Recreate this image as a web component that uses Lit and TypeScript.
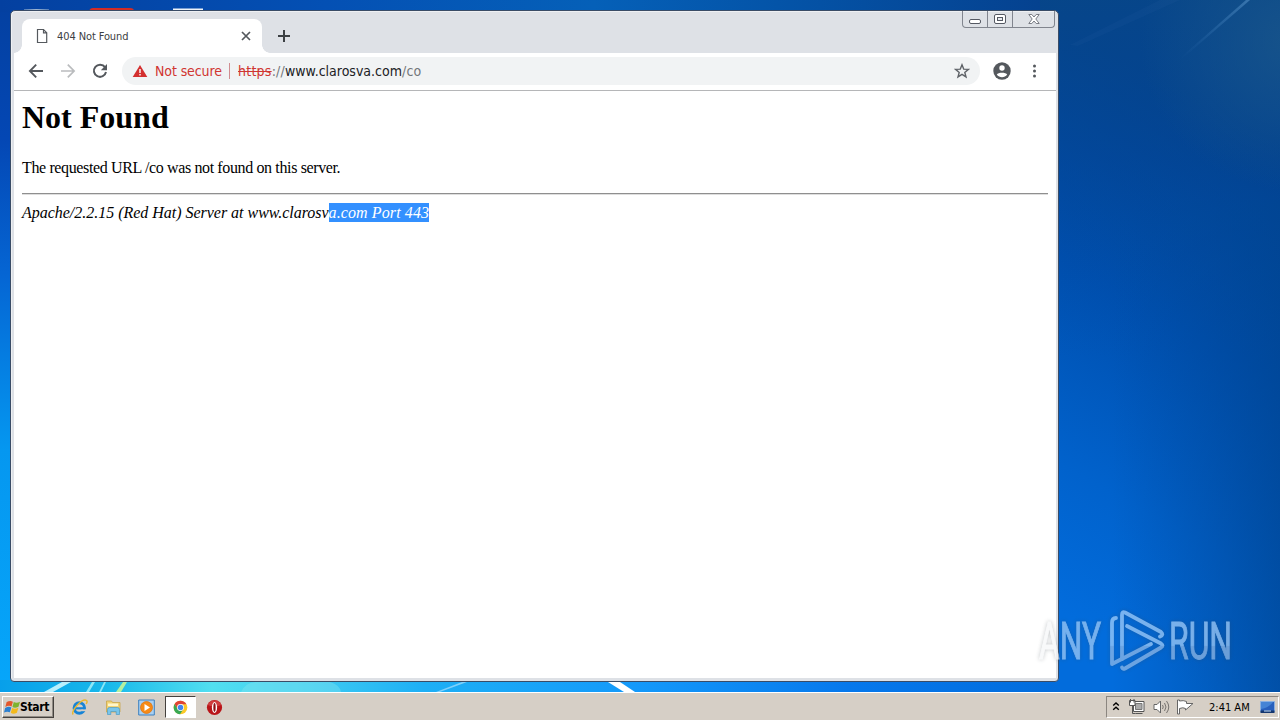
import { LitElement, html, css, svg } from "lit";
import { customElement } from "lit/decorators.js";

@customElement("desktop-wallpaper")
class DesktopWallpaper extends LitElement {
  static styles = css`
    :host, svg { display: block; width: 100%; height: 100%; }
  `;
  render() {
    return html`<svg viewBox="0 0 1280 692" preserveAspectRatio="none">
      <defs>
        <linearGradient id="left" x1="0" y1="0" x2="0" y2="1">
          <stop offset="0" stop-color="#0440a0" /><stop offset=".2" stop-color="#0447b4" />
          <stop offset=".4" stop-color="#0566d4" /><stop offset=".65" stop-color="#0597f0" />
          <stop offset="1" stop-color="#06a6fa" />
        </linearGradient>
        <linearGradient id="top" x1="0" y1="0" x2="1" y2="0">
          <stop offset="0" stop-color="#0440a0" /><stop offset=".3" stop-color="#0450b4" />
          <stop offset=".55" stop-color="#0560b8" /><stop offset=".72" stop-color="#0454a8" />
          <stop offset="1" stop-color="#053f8c" />
        </linearGradient>
        <linearGradient id="right" gradientUnits="userSpaceOnUse" x1="1040" y1="600" x2="1290" y2="150">
          <stop offset="0" stop-color="#026cdc" /><stop offset=".25" stop-color="#0162cc" />
          <stop offset=".6" stop-color="#004fae" /><stop offset="1" stop-color="#033f86" />
        </linearGradient>
        <linearGradient id="shade" x1="0" y1="0" x2="0" y2="1">
          <stop offset="0" stop-color="#07468a" stop-opacity=".9" />
          <stop offset=".45" stop-color="#03479a" stop-opacity=".45" />
          <stop offset="1" stop-color="#0050b0" stop-opacity="0" />
        </linearGradient>
        <linearGradient id="edge" x1="0" y1="0" x2="1" y2="0">
          <stop offset=".3" stop-color="#004a9e" stop-opacity="0" />
          <stop offset="1" stop-color="#004593" stop-opacity=".7" />
        </linearGradient>
        <radialGradient id="corner" gradientUnits="userSpaceOnUse" cx="1290" cy="40" r="150">
          <stop offset="0" stop-color="#1a568a" stop-opacity=".8" />
          <stop offset="1" stop-color="#1a568a" stop-opacity="0" />
        </radialGradient>
        <linearGradient id="bottom" x1="0" y1="0" x2="1" y2="0">
          <stop offset="0" stop-color="#079fea" /><stop offset=".1" stop-color="#18b8ea" />
          <stop offset=".2" stop-color="#52dff0" /><stop offset=".28" stop-color="#42cff2" />
          <stop offset=".4" stop-color="#1eaff5" /><stop offset=".6" stop-color="#1499fa" />
          <stop offset=".8" stop-color="#0678ec" /><stop offset="1" stop-color="#026cdc" />
        </linearGradient>
        <linearGradient id="ray" x1="1" y1="0" x2="0" y2="1">
          <stop offset="0" stop-color="#4a86bc" stop-opacity=".7" />
          <stop offset="1" stop-color="#2d6cae" stop-opacity="0" />
        </linearGradient>
      </defs>
      <rect width="1280" height="692" fill="url(#left)" />
      <rect width="1080" height="12" fill="url(#top)" />
      <rect x="1040" width="240" height="692" fill="url(#right)" />
      <rect x="1040" width="240" height="360" fill="url(#shade)" />
      <rect x="1040" y="200" width="240" height="492" fill="url(#edge)" />
      <rect x="1120" width="160" height="200" fill="url(#corner)" />
      <rect y="680" width="1060" height="12" fill="url(#bottom)" />
      <path d="M1246 0 1180 58 1183 58 1250 0z" fill="url(#ray)" />
      <path d="M1160 0 1070 45 1078 46 1180 0z" fill="#3a78b0" opacity=".08" />
      <path d="M44 692 62 682H71L53 692z" fill="#b9effc" />
      <path d="M86 692 92 682H95L89 692zM99 692 104 682H106L101 692z" fill="#8de6f5" />
      <path d="M116 692 123 682H127L121 692z" fill="#b4f0a0" />
      <path d="M241 692Q246 682 256 682H330Q340 685 341 692z" fill="#90e8ee" opacity=".35" />
      <path d="M436 692 462 682H467L440 692z" fill="#7fd0fb" />
      <path d="M608 682H620L635 692H624z" fill="#fff" />
      <path d="M24 11V9.500Q36 8.500 49 9.500V11z" fill="#9db4cf" />
      <path d="M89 11Q90 8 93 8H130Q134 8 134 11z" fill="#d42c25" />
      <rect x="173" y="8.5" width="30" height="2.5" fill="#eef3f8" />
    </svg>`;
  }
}

@customElement("browser-window")
class BrowserWindow extends LitElement {
  static styles = css`
    :host {
      display: flex; flex-direction: column; box-sizing: border-box;
      border: 1px solid #3a4c66; border-radius: 5px 5px 4px 4px;
      background: #dee1e6; padding: 0 2px 3px 3px; overflow: hidden;
      font-family: "DejaVu Sans Condensed", "DejaVu Sans", sans-serif;
      box-shadow: inset 1px 1px 0 #eef0f3;
    }
    svg { display: block; flex: none; }
    .titlebar { display: flex; height: 42px; flex: none; align-items: flex-start; }
    .tab {
      display: flex; align-items: center; width: 240px; height: 34px; margin: 8px 0 0 8px;
      background: #fff; border-radius: 8px 8px 0 0; box-sizing: border-box; padding: 0 10px 0 13px;
      position: relative;
    }
    .tab::before, .tab::after {
      content: ""; position: absolute; bottom: 0; width: 8px; height: 8px;
    }
    .tab::before { left: -8px; background: radial-gradient(circle at 0 0, transparent 7.5px, #fff 8px); }
    .tab::after { right: -8px; background: radial-gradient(circle at 100% 0, transparent 7.5px, #fff 8px); }
    .title { flex: 1; margin-left: 8px; padding-top: 1px; font-size: 11px; line-height: 14px; letter-spacing: -.1px; color: #3c4043; white-space: nowrap; }
    .plus { margin: 18px 0 0 15px; }
    .controls { display: flex; margin-left: auto; margin-right: 1px; height: 17px; width: 93px; box-sizing: border-box; border: 1px solid #81858e; border-top: 0; border-radius: 0 0 4px 4px; }
    .control { display: flex; align-items: center; justify-content: center; width: 24px; }
    .control + .control { border-left: 1px solid #81858e; }
    .control:last-child { flex: 1; }
    .toolbar { display: flex; align-items: center; flex: none; height: 35px; padding-bottom: 2px; background: #fff; border-bottom: 1px solid #b5b6b8; }
    .back, .forward, .reload { margin-left: 12px; }
    .address { display: flex; align-items: center; flex: 1; height: 28px; border-radius: 14px; background: #f1f3f4; margin: 0 12px; padding: 0 10px; font-size: 14px; }
    .unsafe { color: #d03531; margin-left: 7px; width: 68px; white-space: nowrap; letter-spacing: -.1px; }
    .divider { width: 1px; height: 16px; background: #d08d91; margin: 0 8px 0 6px; }
    .url { color: #202124; flex: 1; white-space: nowrap; letter-spacing: 0; }
    .scheme { color: #d03531; text-decoration: line-through; letter-spacing: .25px; }
    .muted { color: #73777b; letter-spacing: .2px; }
    .menu { margin: 0 18px; }
    .page { flex: 1; background: #fff; padding: 8px; font-family: "Liberation Serif", serif; font-size: 16px; color: #000; }
    h1 { font-size: 32px; line-height: 37px; margin: 0 0 21px; }
    p { margin: 0; line-height: 19px; padding-top: 1px; letter-spacing: -.37px; }
    hr { margin: 16px 0 8px; border: 0; height: 2px; background: linear-gradient(#8f8f8f 50%, #dedede 50%); }
    address { line-height: 19px; display: flex; letter-spacing: -.02px; white-space: pre; }
    .selected { background: #3390ff; color: #fff; letter-spacing: .1px; }
  `;
  render() {
    return html`
      <div class="titlebar">
        <div class="tab">
          <svg width="14" height="16" viewBox="0 0 14 16"><path d="M2.5 1.5h6l3.2 3.2v9.8H2.5zM8.5 1.5v3.3h3.2" fill="none" stroke="#55595e" stroke-width="1.2" /></svg>
          <span class="title">404 Not Found</span>
          <svg width="12" height="12" viewBox="0 0 12 12"><path d="m2 2 8 8m0-8-8 8" stroke="#54585d" stroke-width="1.7" /></svg>
        </div>
        <svg class="plus" width="14" height="14" viewBox="0 0 14 14"><path d="M7 1v12M1 7h12" stroke="#3c4043" stroke-width="2" /></svg>
        <div class="controls">
          <div class="control"><svg width="14" height="14" viewBox="0 0 14 14"><rect x="1.5" y="7.5" width="11" height="4" rx="1.5" fill="#fff" stroke="#555963" /></svg></div>
          <div class="control"><svg width="14" height="14" viewBox="0 0 14 14"><rect x="1.5" y="2.5" width="11" height="9" rx="1.5" fill="#fff" stroke="#555963" /><rect x="4.5" y="5.5" width="5" height="3" fill="#e6e9ef" stroke="#555963" /></svg></div>
          <div class="control"><svg width="14" height="14" viewBox="0 0 14 14"><path d="M1.8 2.5h3L7 5l2.2-2.5h3L8.800 7l3.400 4.500h-3L7 9l-2.200 2.500h-3L5.200 7z" fill="#fff" stroke="#6c6f78" stroke-width=".9" /></svg></div>
        </div>
      </div>
      <div class="toolbar">
        <svg class="back" width="20" height="20" viewBox="0 0 20 20"><path d="M17 10H4m6.2-6.3L3.9 10l6.3 6.3" fill="none" stroke="#54585d" stroke-width="1.9" /></svg>
        <svg class="forward" width="20" height="20" viewBox="0 0 20 20"><path d="M3 10h13M9.8 3.7l6.3 6.3-6.3 6.3" fill="none" stroke="#babcbe" stroke-width="1.7" /></svg>
        <svg class="reload" width="20" height="20" viewBox="0 0 20 20"><path d="M15 6.2A6.1 6.1 0 1 0 16 11" fill="none" stroke="#54585d" stroke-width="2" /><path d="M17 3v6.2h-6.2z" fill="#54585d" /></svg>
        <div class="address">
          <svg width="16" height="16" viewBox="0 0 16 16"><path d="M8 2 15.3 14H.7z" fill="#d32f2f" /><path d="M7.3 6h1.4v4H7.3zm0 5h1.4v1.4H7.3z" fill="#fff" /></svg>
          <span class="unsafe">Not secure</span><span class="divider"></span>
          <span class="url"><span class="scheme">https</span><span class="muted">://</span>www.clarosva.com<span class="muted">/co</span></span>
          <svg width="16" height="16" viewBox="0 0 16 16"><path d="m8 1.8 1.7 4.3 4.7.3-3.6 3 1.2 4.5L8 11.4l-4 2.5 1.2-4.5-3.600-3 4.700-.3z" fill="none" stroke="#5f6368" stroke-width="1.4" /></svg>
        </div>
        <svg width="20" height="20" viewBox="0 0 20 20"><circle cx="10" cy="10" r="8.7" fill="#54585d" /><circle cx="10" cy="7" r="2.7" fill="#fff" /><path d="M4.8 13.6c1.2-2.6 9.2-2.6 10.4 0-2.5 3.5-7.9 3.5-10.4 0z" fill="#fff" /></svg>
        <svg class="menu" width="8" height="16" viewBox="0 0 8 16"><g fill="#54585d"><circle cx="4.500" cy="3" r="1.5" /><circle cx="4.500" cy="8" r="1.5" /><circle cx="4.500" cy="13" r="1.5" /></g></svg>
      </div>
      <div class="page">
        <h1>Not Found</h1>
        <p>The requested URL /co was not found on this server.</p>
        <hr />
        <address>Apache/2.2.15 (Red Hat) Server at www.clarosv<span class="selected">a.com Port 443</span></address>
      </div>`;
  }
}

const flag = svg`<path d="M2 3q4-2.5 7-.5L7.5 8q-3-1.800-7 .5z" fill="#e4572b"/><path d="M10 3q3 1.800 7-.3L15.300 8.300q-4 2-6.800.2z" fill="#7eb32f"/><path d="M.3 9.500q4-2.300 7-.5L5.600 14.500q-3-1.700-6.600.3z" fill="#2d80d0"/><path d="M8.200 9.600q3 1.800 7-.2l-1.700 5.500q-4 2.200-6.900.2z" fill="#f3b91b"/>`;

@customElement("task-bar")
class TaskBar extends LitElement {
  static styles = css`
    :host { display: flex; box-sizing: border-box; height: 29px; background: #d6cfc6; border-top: 1px solid #eceae6; box-shadow: inset 0 1px #fff; padding: 3px 1px 1px 2px; align-items: center; font-family: "DejaVu Sans Condensed", "DejaVu Sans", sans-serif; color: #000; }
    svg { display: block; flex: none; overflow: visible; }
    .start { box-sizing: border-box; display: flex; align-items: center; width: 52px; height: 22px; border: 1px solid; border-color: #fff #45413d #45413d #fff; box-shadow: inset -1px -1px #918c85; padding-left: 1px; font-size: 12px; font-weight: bold; letter-spacing: -.35px; white-space: nowrap; }
    .launch { display: flex; align-items: center; margin-left: 17px; }
    .launch svg { margin-right: 16.5px; }
    .launch .active { box-sizing: border-box; display: flex; align-items: center; justify-content: center; width: 31px; height: 22px; border: 1px solid; border-color: #45413d #fff #fff #45413d; background: #fff; margin: 0 10px 0 -6.5px; }
    .launch .active svg { margin: 0; }
    .tray { box-sizing: border-box; display: flex; align-items: center; margin-left: auto; width: 173px; height: 22px; border: 1px solid; border-color: #8b8680 #fff #fff #8b8680; padding-left: 5px; }
    .network { margin-left: 9px; } .sound { margin-left: 8px; } .alert { margin-left: 7px; }
    .clock { margin-left: 15px; width: 42px; font-size: 11px; letter-spacing: 0; white-space: nowrap; }
    .show { margin-left: 9px; }
  `;
  render() {
    return html`
      <div class="start"><svg width="16" height="16" viewBox="-1 0 18 17">${flag}</svg>Start</div>
      <div class="launch">
        <svg width="17" height="17" viewBox="0 0 17 17"><circle cx="8.3" cy="9" r="5.2" fill="none" stroke="#1784d6" stroke-width="3" /><path d="M4 8.2h10v2.2H4z" fill="#1784d6" /><path d="M10.5 10.4h5v1.8h-5z" fill="#d6cfc6" /><path d="M2.2 15.5C-1 12.7 11-1.2 15.6 1.5c.8.6.5 2-.4 3.5" fill="none" stroke="#e9b72d" stroke-width="1.4" /></svg>
        <svg width="17" height="17" viewBox="0 0 17 17"><path d="M1.5 2h5l1 1.5H15V13H1.5z" fill="#f2d375" stroke="#c9a64b" stroke-width=".8" /><path d="M3 4.5h10V7H3z" fill="#fff6cc" /><path d="M2.5 15.5v-5Q2.500 8.500 4.500 8.500h8q2 0 2 2v5h-3.300v-3H5.800v3z" fill="#78c5ec" stroke="#4c9bc6" stroke-width=".7" /></svg>
        <svg width="17" height="17" viewBox="0 0 17 17"><path d="M.7 1h15.600v15H.700z" fill="#a9d0f2" stroke="#3c80bf" /><circle cx="8.500" cy="8.500" r="6" fill="#f68a16" stroke="#dc7009" stroke-width=".7" /><path d="m6.500 5 5.500 3.500L6.500 12z" fill="#fff" /></svg>
        <div class="active"><svg width="15" height="15" viewBox="0 0 16 16"><circle cx="8" cy="8" r="7.300" fill="#fbc928" /><path d="M1.700 4.300A7.300 7.300 0 0 1 14.300 4.500H8L5 9.800z" fill="#df4436" /><path d="M1.700 4.300A7.300 7.300 0 0 0 7.500 15.300L11 9.800 8 11.500 5 9.800z" fill="#38a853" /><circle cx="8" cy="8" r="3.700" fill="#fff" /><circle cx="8" cy="8" r="2.900" fill="#4286ed" /></svg></div>
        <svg width="17" height="17" viewBox="0 0 17 17"><circle cx="8.500" cy="8.500" r="7.600" fill="#b91519" /><path d="M1.800 6a7.200 7.200 0 0 1 13.400 0q-6.700 3-13.400 0z" fill="#df5956" opacity=".6" /><ellipse cx="8.500" cy="8.500" rx="2.600" ry="5.400" fill="#fff" /><ellipse cx="8.500" cy="8.500" rx="1.150" ry="4.400" fill="#8d1014" /></svg>
      </div>
      <div class="tray">
        <svg width="8" height="12" viewBox="0 0 8 12"><path d="M1.200 4.500 4 2l2.800 2.500M1.200 8.700 4 6.200l2.800 2.500" fill="none" stroke="#000" stroke-width="1.400" /></svg>
        <svg class="network" width="16" height="16" viewBox="0 0 16 16"><path d="M4.500 2.500h10.500v10H4.500z" fill="#fff" stroke="#555" /><path d="M6.500 4.500h6.500v6H6.500z" fill="#aaa" stroke="#777" /><path d="M6.500 14.500h7M3.500 7v7.500h3" fill="none" stroke="#555" /><path d="M.500 1.500h5.500v5H.500z" fill="#fff" stroke="#555" /><path d="M1.500 0v3.500m3.500-3.500v3.500" stroke="#555" /></svg>
        <svg class="sound" width="17" height="16" viewBox="0 0 17 16"><path d="M1 5.500h3L7.500 2v12L4 10.500H1z" fill="#fff" stroke="#666" /><path d="M9.500 6q1.500 2 0 4m2-6q3 4 0 8m2-10q4.500 6 0 12" fill="none" stroke="#77736f" /></svg>
        <svg class="alert" width="17" height="16" viewBox="0 0 17 16"><path d="M.500 1v14h2V9.500q3.500-1.500 6 0v1.500l7.500-6.500H9.500V2.500q-3-1.500-7-.5V1z" fill="#fff" stroke="#666" /></svg>
        <span class="clock">2:41 AM</span>
        <svg class="show" width="16" height="14" viewBox="0 0 16 14"><path d="M.500 1.500h14v10H.500z" fill="#2860bd" stroke="#8ab0df" /><path d="M1 2v7q8-1 12-7z" fill="#4584d5" /><path d="M.500 10.500h14V13H.500z" fill="#14366f" /><path d="M4 11h7" stroke="#c4dcf4" /></svg>
      </div>`;
  }
}

@customElement("app-root")
class AppRoot extends LitElement {
  static styles = css`
    :host { display: flex; flex-direction: column; width: 1280px; height: 720px; position: relative; overflow: hidden; }
    .desktop { flex: 1; min-height: 0; position: relative; }
    desktop-wallpaper { height: 692px; }
    browser-window { position: absolute; left: 10px; top: 10px; width: 1049px; height: 672px; }
    .watermark { position: absolute; left: 1030px; top: 600px; width: 212px; height: 80px; overflow: visible; }
    .word { font-family: Roboto, "Liberation Sans", sans-serif; font-size: 52px; font-weight: 400; stroke-width: 1px; }
    .glow { filter: drop-shadow(0 0 2px rgb(60 70 80 / 45%)); }
  `;
  render() {
    return html`
      <div class="desktop">
        <desktop-wallpaper></desktop-wallpaper>
        <browser-window></browser-window>
        <svg class="watermark" viewBox="0 0 212 80">
          <defs><linearGradient id="fade" gradientUnits="userSpaceOnUse" x1="0" y1="10" x2="0" y2="72"><stop offset=".57" stop-color="#b8dcff" /><stop offset=".59" stop-color="#a4c4e9" /></linearGradient>
          <linearGradient id="wordfade" gradientUnits="userSpaceOnUse" x1="8" y1="0" x2="32" y2="0"><stop offset=".85" stop-color="#f5f6f8" /><stop offset=".9" stop-color="#b4d6f8" /></linearGradient></defs>
          <g class="glow" opacity=".65">
            <text class="word" x="9" y="59" textLength="62" lengthAdjust="spacingAndGlyphs" fill="url(#wordfade)" stroke="url(#wordfade)">ANY</text>
            <text class="word" x="139" y="59" textLength="63" lengthAdjust="spacingAndGlyphs" fill="url(#fade)" stroke="url(#fade)">RUN</text>
            <g fill="none" stroke="url(#fade)" stroke-width="3.8" stroke-linejoin="round" stroke-linecap="round">
              <path d="M86 18q-4 0-4 5v41l39-20" />
              <path d="M92 59V15q0-4 3-2.500l36 19.500q3 3-1 4.500" />
              <path d="M97 26 131 43.500q3 2 0 4L95 68.500q-2 1-3-1" />
            </g>
          </g>
        </svg>
      </div>
      <task-bar></task-bar>`;
  }
}
